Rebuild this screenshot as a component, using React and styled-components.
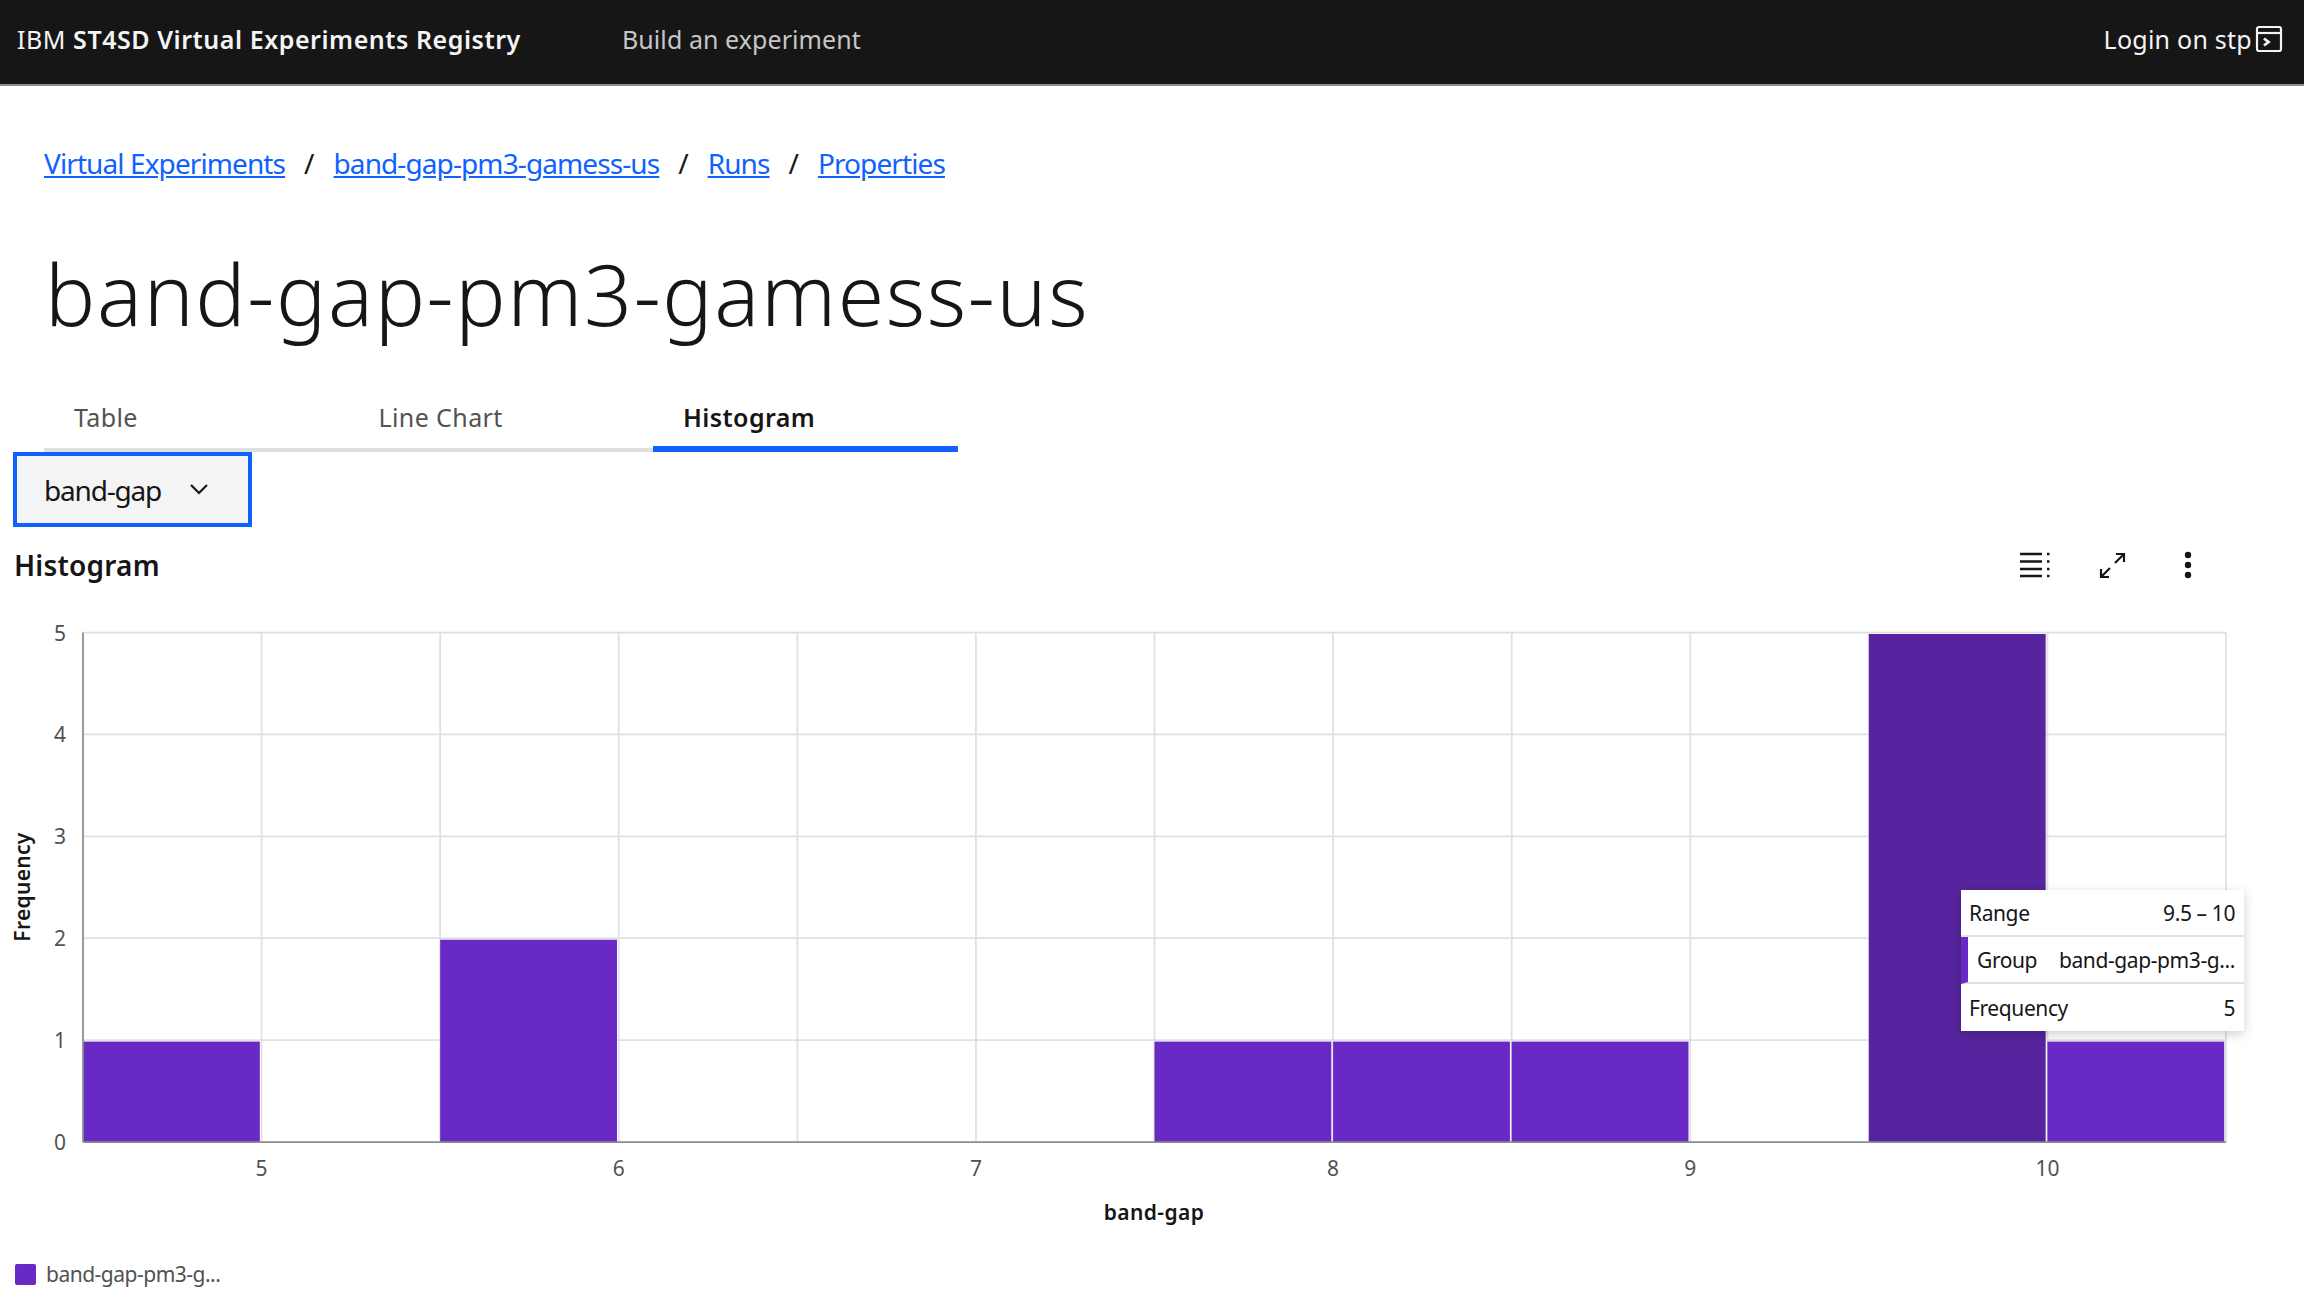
import React from "react";
import styled, { createGlobalStyle } from "styled-components";

const ink = "#161616";
const grayText = "#525252";
const link = "#0f62fe";
const purple = "#6929c4";
const purpleHover = "#56249e";
const grid = "#e0e0e0";
const axis = "#8d8d8d";
const font = `"Noto Sans", "Open Sans", sans-serif`;

const GlobalStyle = createGlobalStyle`
  html, body {
    margin: 0;
    padding: 0;
    background: #fff;
    overflow: hidden;
  }
  body {
    font-family: ${font};
    color: ${ink};
  }
`;

const Page = styled.div`
  width: 2304px;
  height: 1303px;
  overflow: hidden;
`;

const Header = styled.header`
  display: flex;
  align-items: center;
  box-sizing: border-box;
  height: 86px;
  padding: 0 21px 6px 17px;
  background: ${ink};
  border-bottom: 2px solid #8d8d8d;
`;

const Brand = styled.div`
  width: 605px;
  font-size: 25px;
  color: #f4f4f4;
  letter-spacing: 0.55px;
  b {
    font-weight: 600;
  }
`;

const NavItem = styled.div`
  flex: 1;
  font-size: 25px;
  color: #c6c6c6;
  letter-spacing: 0.07px;
`;

const Login = styled.div`
  display: flex;
  align-items: center;
  gap: 3px;
  font-size: 25px;
  color: #f4f4f4;
  letter-spacing: 0.25px;
`;

const Crumbs = styled.nav`
  display: flex;
  align-items: center;
  height: 40px;
  margin: 57px 0 0 44px;
  font-size: 28px;
`;

const Crumb = styled.a`
  color: ${link};
  text-decoration: underline;
  letter-spacing: -0.9px;
`;

const Slash = styled.span`
  margin: 0 19px;
`;

const Title = styled.h1`
  margin: 55px 0 0 45px;
  font-size: 84px;
  line-height: 112px;
  font-weight: 300;
  letter-spacing: 1.65px;
`;

const Tabs = styled.div`
  display: flex;
  margin: 46px 0 0 44px;
`;

const Tab = styled.div`
  box-sizing: border-box;
  width: 304.5px;
  height: 56px;
  padding: 4px 0 0 30px;
  font-size: 25px;
  letter-spacing: 0.4px;
  color: ${(p) => (p.$active ? ink : grayText)};
  font-weight: ${(p) => (p.$active ? 600 : 400)};
  border-bottom: ${(p) => (p.$active ? `6px solid ${link}` : `4px solid ${grid}`)};
`;

const Dropdown = styled.div`
  display: flex;
  align-items: center;
  justify-content: space-between;
  box-sizing: border-box;
  width: 239px;
  height: 75px;
  margin-left: 13px;
  padding: 0 40px 0 27px;
  background: #f4f4f4;
  border: 4px solid ${link};
  font-size: 28px;
  letter-spacing: -1.2px;
`;

const ChartHead = styled.div`
  display: flex;
  align-items: center;
  justify-content: space-between;
  box-sizing: border-box;
  height: 70px;
  padding: 6px 112px 0 14px;
`;

const ChartTitle = styled.h2`
  margin: 0;
  font-size: 28px;
  font-weight: 600;
  letter-spacing: 0.2px;
`;

const Toolbar = styled.div`
  display: flex;
  align-items: center;
  gap: 49px;
  color: ${ink};
`;

const ChartArea = styled.div`
  position: relative;
  height: 650px;
`;

const PlotSvg = styled.svg`
  display: block;
  font-family: ${font};
`;

const Tip = styled.div`
  position: absolute;
  left: 1961px;
  top: 293px;
  width: 283px;
  background: #fff;
  box-shadow: 0 3px 10px rgba(0, 0, 0, 0.2);
  font-size: 21px;
  letter-spacing: -0.4px;
`;

const TipRow = styled.div`
  display: flex;
  align-items: center;
  justify-content: space-between;
  box-sizing: border-box;
  height: 47px;
  padding: 0 9px 0 ${(p) => (p.$marked ? "9px" : "8px")};
  border-bottom: ${(p) => (p.$last ? "none" : `2px solid ${grid}`)};
  border-left: ${(p) => (p.$marked ? `7px solid ${purple}` : "none")};
`;

const Legend = styled.div`
  display: flex;
  align-items: center;
  gap: 10px;
  margin: 33px 0 0 15px;
  font-size: 21px;
  letter-spacing: -0.5px;
  color: ${grayText};
`;

const Swatch = styled.span`
  width: 21px;
  height: 21px;
  border-radius: 2px;
  background: ${purple};
`;

const Dots = styled.svg`
  margin-left: 9px;
`;

// chart geometry, in page pixels of the svg
const left = 83;
const right = 2226;
const top = 632.5;
const bottom = 1142;
const svgTop = 597;
const step = (right - left) / 12;
const unit = (bottom - top) / 5;
const bins = [1, 0, 2, 0, 0, 0, 1, 1, 1, 0, 5, 1];

const Plot = () => {
  const xLines = Array.from({ length: 12 }, (_, i) => left + step * (i + 1));
  const yLines = [1, 2, 3, 4, 5];
  return (
    <PlotSvg width="2304" height="630" viewBox={`0 ${svgTop} 2304 630`}>
      {xLines.map((x) => (
        <line key={x} x1={x} x2={x} y1={top} y2={bottom} stroke={grid} strokeWidth="1.75" />
      ))}
      {yLines.map((v) => (
        <line key={v} x1={left} x2={right} y1={bottom - v * unit} y2={bottom - v * unit} stroke={grid} strokeWidth="1.75" />
      ))}
      {bins.map((n, i) =>
        n === 0 ? null : (
          <rect
            key={i}
            x={left + step * i}
            y={bottom - n * unit + 1.5}
            width={step - 1.75}
            height={n * unit - 1.5}
            fill={n === 5 ? purpleHover : purple}
          />
        )
      )}
      <line x1={left} x2={left} y1={top} y2={bottom} stroke={axis} strokeWidth="1.75" />
      <line x1={left} x2={right} y1={bottom} y2={bottom} stroke={axis} strokeWidth="1.75" />
      {[0, 1, 2, 3, 4, 5].map((v) => (
        <text key={v} x="66" y={bottom - v * unit + 8} textAnchor="end" fontSize="21" fill={grayText}>
          {v}
        </text>
      ))}
      {[5, 6, 7, 8, 9, 10].map((v, i) => (
        <text key={v} x={left + step * (2 * i + 1)} y="1176" textAnchor="middle" fontSize="21" fill={grayText}>
          {v}
        </text>
      ))}
      <text x="1154" y="1220" textAnchor="middle" fontSize="21" fontWeight="600" letterSpacing="0.4" fill={ink}>
        band-gap
      </text>
      <text
        x="0"
        y="0"
        transform="translate(30 887) rotate(-90)"
        textAnchor="middle"
        fontSize="21"
        fontWeight="600"
        letterSpacing="0.3"
        fill={ink}
      >
        Frequency
      </text>
    </PlotSvg>
  );
};

const Chevron = () => (
  <svg width="18" height="11" viewBox="0 0 18 11" fill="none" stroke={ink} strokeWidth="2.2">
    <path d="M1 1l8 8 8-8" />
  </svg>
);

const RowsIcon = () => (
  <svg width="30" height="26" viewBox="0 0 30 26" fill="none" stroke="currentColor" strokeWidth="2.4">
    <path d="M0 2h22M0 9.500h22M0 17h22M0 24h22" />
    <path d="M27 2h2.500M27 9.500h2.500M27 17h2.500M27 24h2.500" />
  </svg>
);

const ExpandIcon = () => (
  <svg width="27" height="27" viewBox="0 0 27 27" fill="none" stroke="currentColor" strokeWidth="2.2">
    <path d="M17 2h8v8M25 2l-9 9M11 16l-9 9M2 17v8h8" />
  </svg>
);

const DotsIcon = () => (
  <Dots width="8" height="28" viewBox="0 0 8 28" fill="currentColor">
    <circle cx="4" cy="4" r="3.200" />
    <circle cx="4" cy="14" r="3.200" />
    <circle cx="4" cy="24" r="3.200" />
  </Dots>
);

const LoginIcon = () => (
  <svg width="28" height="28" viewBox="0 0 28 28" fill="none" stroke="#f4f4f4" strokeWidth="2.2">
    <rect x="2" y="2" width="24" height="24" rx="2" />
    <path d="M2 8h24" />
    <path d="M9 13.500l4.500 3.500-4.500 3.500" strokeWidth="2.800" />
  </svg>
);

const App = () => (
  <Page>
    <GlobalStyle />
    <Header>
      <Brand>
        IBM <b>ST4SD Virtual Experiments Registry</b>
      </Brand>
      <NavItem>Build an experiment</NavItem>
      <Login>
        Login on stp
        <LoginIcon />
      </Login>
    </Header>
    <Crumbs>
      <Crumb>Virtual Experiments</Crumb>
      <Slash>/</Slash>
      <Crumb>band-gap-pm3-gamess-us</Crumb>
      <Slash>/</Slash>
      <Crumb>Runs</Crumb>
      <Slash>/</Slash>
      <Crumb>Properties</Crumb>
    </Crumbs>
    <Title>band-gap-pm3-gamess-us</Title>
    <Tabs>
      <Tab>Table</Tab>
      <Tab>Line Chart</Tab>
      <Tab $active>Histogram</Tab>
    </Tabs>
    <Dropdown>
      band-gap
      <Chevron />
    </Dropdown>
    <ChartHead>
      <ChartTitle>Histogram</ChartTitle>
      <Toolbar>
        <RowsIcon />
        <ExpandIcon />
        <DotsIcon />
      </Toolbar>
    </ChartHead>
    <ChartArea>
      <Plot />
      <Tip>
        <TipRow>
          <span>Range</span>
          <span>9.5 – 10</span>
        </TipRow>
        <TipRow $marked>
          <span>Group</span>
          <span>band-gap-pm3-g...</span>
        </TipRow>
        <TipRow $last>
          <span>Frequency</span>
          <span>5</span>
        </TipRow>
      </Tip>
      <Legend>
        <Swatch />
        band-gap-pm3-g...
      </Legend>
    </ChartArea>
  </Page>
);

export default App;
